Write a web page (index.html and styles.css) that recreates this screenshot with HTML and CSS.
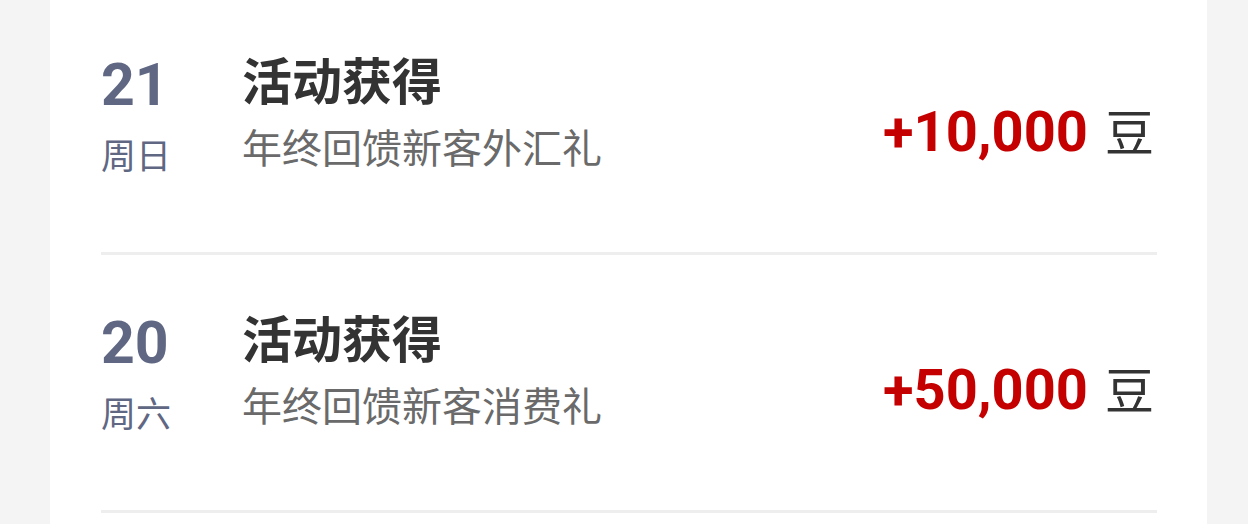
FILE: index.html
```html
<!DOCTYPE html>
<html lang="zh-CN">
<head>
<meta charset="utf-8">
<link rel="stylesheet" href="styles.css">
</head>
<body>
<div class="card">
  <div class="list">
    <div class="row">
      <div class="date">
        <div class="day">21</div>
        <div class="week">周日</div>
      </div>
      <div class="info">
        <div class="title">活动获得</div>
        <div class="sub">年终回馈新客外汇礼</div>
      </div>
      <div class="amount"><span class="num">+10,000</span><span class="unit">豆</span></div>
    </div>
    <div class="row">
      <div class="date">
        <div class="day">20</div>
        <div class="week">周六</div>
      </div>
      <div class="info">
        <div class="title">活动获得</div>
        <div class="sub">年终回馈新客消费礼</div>
      </div>
      <div class="amount"><span class="num">+50,000</span><span class="unit">豆</span></div>
    </div>
  </div>
</div>
</body>
</html>
```
FILE: styles.css
```css
html, body {
  margin: 0;
  padding: 0;
  background: #f4f4f4;
  height: 524px;
  overflow: hidden;
  font-family: Roboto, "Noto Sans CJK SC", sans-serif;
}
.card {
  margin-left: 50px;
  width: 1157px;
  height: 524px;
  background: #ffffff;
  overflow: hidden;
}
.list {
  margin-top: -3px;
  padding: 0 50px 0 51px;
}
.row {
  display: flex;
  align-items: center;
  height: 255px;
  border-bottom: 3px solid #eeeeee;
}
.date {
  width: 141px;
  flex-shrink: 0;
  color: #5f6783;
  align-self: flex-start;
  padding-top: 54px;
}
.day {
  font-size: 59px;
  font-weight: 700;
  line-height: 68px;
}
.week {
  font-family: "Noto Sans CJK SC", sans-serif;
  font-size: 35px;
  line-height: 40px;
  margin-top: 15px;
}
.info {
  flex: 1;
  align-self: flex-start;
  padding-top: 51px;
}
.title {
  font-family: "Noto Sans CJK SC", sans-serif;
  font-size: 50px;
  font-weight: 700;
  color: #333333;
  line-height: 60px;
}
.sub {
  font-family: "Noto Sans CJK SC", sans-serif;
  font-size: 40px;
  color: #6a6a6a;
  line-height: 56px;
  margin-top: 10px;
}
.amount {
  display: flex;
  align-items: baseline;
  margin-top: 10px;
  padding-right: 3px;
}
.num {
  font-size: 56px;
  font-weight: 700;
  color: #c40000;
}
.unit {
  font-family: "Noto Sans CJK SC", sans-serif;
  font-size: 49px;
  color: #333333;
  margin-left: 17px;
}
```
